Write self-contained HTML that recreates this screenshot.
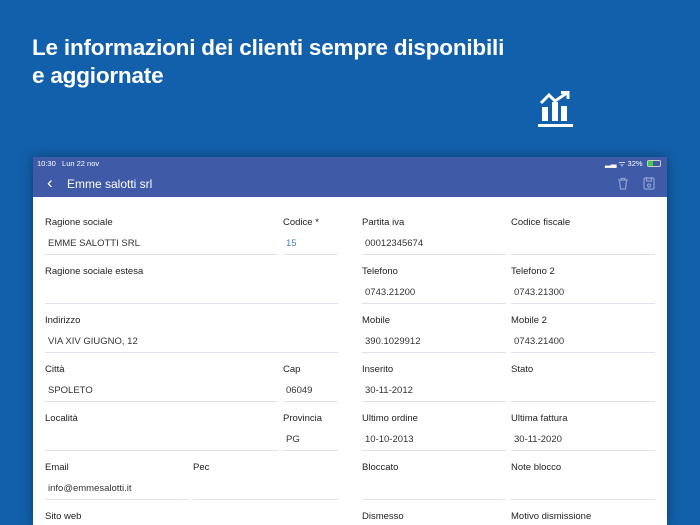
<!DOCTYPE html>
<html><head><meta charset="utf-8"><style>
*{margin:0;padding:0;box-sizing:border-box}
html,body{width:700px;height:525px;overflow:hidden}
body{background:#1260ab;font-family:"Liberation Sans",sans-serif;position:relative}
.t{position:absolute;left:32px;color:#fff;font-weight:bold;font-size:22.5px;letter-spacing:-0.2px;white-space:nowrap}
.card{position:absolute;left:33px;top:157px;width:634px;height:368px;background:#fff;box-shadow:0 0 12px rgba(0,0,0,.35)}
.sb{position:absolute;left:0;top:0;width:634px;height:13px;background:#3f5ba8;color:#fff;font-size:7.5px}
.nav{position:absolute;left:0;top:13px;width:634px;height:27px;background:#3f5ba8;color:#fff}
.l{position:absolute;font-size:9.5px;color:#222}
.v{position:absolute;font-size:9.5px;color:#333}
.u{position:absolute;height:1px;background:#dde3ea}
</style></head><body>
<div class="t" style="top:35px">Le informazioni dei clienti sempre disponibili</div>
<div class="t" style="top:63px">e aggiornate</div>
<svg style="position:absolute;left:537px;top:90px" width="38" height="38" viewBox="0 0 38 38" fill="none" stroke="#fff">
<path d="M4 13 L12 5 L18 11 L30 3" stroke-width="3"/><path d="M24 2.5 H31 V9" stroke-width="3"/>
<rect x="5" y="17" width="6" height="14" fill="#fff" stroke="none"/><rect x="15" y="12" width="6" height="19" fill="#fff" stroke="none"/><rect x="24" y="16" width="6" height="15" fill="#fff" stroke="none"/>
<rect x="1" y="34" width="35" height="3" fill="#fff" stroke="none"/></svg>
<div class="card">
<div class="sb"><span style="position:absolute;left:4px;top:2px">10:30&nbsp;&nbsp; Lun 22 nov</span><span style="position:absolute;left:572px;top:2px">▂▃ ᯤ 32%</span><span style="position:absolute;left:614px;top:3px;width:14px;height:7px;border:1px solid #ccc;border-radius:2px"><span style="display:block;width:5px;height:5px;background:#4c4"></span></span></div>
<div class="nav"><span style="position:absolute;left:14px;top:3px;font-size:17px">‹</span><span style="position:absolute;left:34px;top:7px;font-size:12px">Emme salotti srl</span>
<svg style="position:absolute;left:584px;top:7px" width="12" height="13" fill="none" stroke="#8d9fd0" stroke-width="1.2"><path d="M1 3H11M4 3V1.5H8V3M2.5 3L3.5 12H8.5L9.5 3"/></svg>
<svg style="position:absolute;left:610px;top:7px" width="12" height="13" fill="none" stroke="#8d9fd0" stroke-width="1.2"><rect x="1" y="1" width="10" height="11" rx="1"/><rect x="3.5" y="1" width="5" height="3"/><circle cx="6" cy="8.5" r="1.5"/></svg></div>
</div>
<div id="f"></div>
<script>
var rows=[
[["Ragione sociale","EMME SALOTTI SRL",45,278],["Codice *","15",283,338,1],["Partita iva","00012345674",362,506],["Codice fiscale","",511,655]],
[["Ragione sociale estesa","",45,338],["Telefono","0743.21200",362,506],["Telefono 2","0743.21300",511,655]],
[["Indirizzo","VIA XIV GIUGNO, 12",45,338],["Mobile","390.1029912",362,506],["Mobile 2","0743.21400",511,655]],
[["Città","SPOLETO",45,278],["Cap","06049",283,338],["Inserito","30-11-2012",362,506],["Stato","",511,655]],
[["Località","",45,278],["Provincia","PG",283,338],["Ultimo ordine","10-10-2013",362,506],["Ultima fattura","30-11-2020",511,655]],
[["Email","info@emmesalotti.it",45,189],["Pec","",193,338],["Bloccato","",362,506],["Note blocco","",511,655]],
[["Sito web","",45,338],["Dismesso","",362,506],["Motivo dismissione","",511,655]]];
var h="";rows.forEach(function(r,i){var y=217+i*49;r.forEach(function(c){
h+='<div class="l" style="left:'+c[2]+'px;top:'+y+'px">'+c[0]+'</div>';
if(c[1])h+='<div class="v" style="left:'+(c[2]+3)+'px;top:'+(y+21)+'px;'+(c[4]?'color:#4a7fc0':'')+'">'+c[1]+'</div>';
if(y+37<525)h+='<div class="u" style="left:'+c[2]+'px;top:'+(y+37)+'px;width:'+(c[3]-c[2])+'px"></div>';});});
document.getElementById('f').innerHTML=h;
</script>
</body></html>
